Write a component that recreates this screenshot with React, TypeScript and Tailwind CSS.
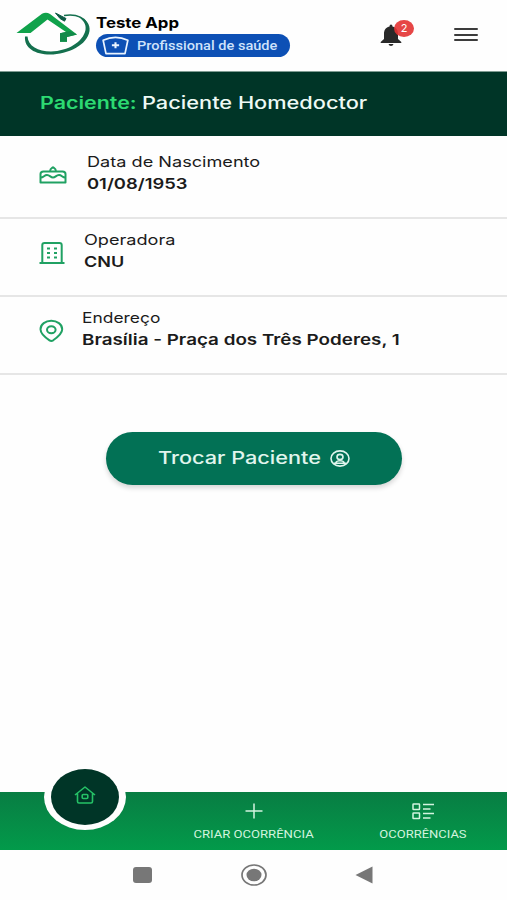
import type { ReactNode } from "react";

function Logo() {
  return (
    <svg viewBox="0 0 76 46" className="h-[46px] w-[76px] shrink-0">
      <path d="M48 3.500 C60 1.500 71.500 5.500 71.500 16" fill="none" stroke="#14704e" strokeWidth="1.500" />
      <path d="M62 4.500 C70 7 74.500 12 73.500 19 C71.500 33 52 42.500 34 42.500 C19 42.500 8 36 9 24.500 L11.500 24.500 C12 34 22 39.500 35 39.500 C52 39 67 30 69.500 18 C70.500 12 67 8 62 4.500Z" fill="#14704e" />
      <path d="M39.500 1 L50 6.500 L48.500 9.200 L44 6.500Z" fill="#0e5b45" stroke="#0e5b45" strokeLinejoin="round" />
      <path d="M0.500 21 L26 1.800 Q30 -.5 34 2 L61 22.500 L51 25 V29.800 H44 V21.300 L50 20 L31.500 7.500 L14.500 21Z" fill="#10a24b" />
      <path d="M44 21.300 L54 19 L61 22.500 L51 25 V29.800 H44Z" fill="#128a4a" />
    </svg>
  );
}

function CakeIcon() {
  return (
    <svg viewBox="0 0 28 18" className="h-[18px] w-[28px]" fill="none" stroke="#20a163" strokeWidth="2" strokeLinejoin="round">
      <path d="M1.500 16.500 V8 Q1.500 5.500 4.500 5.500 H23.500 Q26.500 5.500 26.500 8 V16.500Z" />
      <path d="M1.500 11.500 C5 11.500 5 9 8 9 S11.500 11.500 14 11.500 S17 9 20 9 S23 11.500 26.500 11.500" />
      <path d="M11.500 5 C10.500 3 12.500 2.500 14 1.200 C15.500 2.500 17.500 3 16.500 5" />
    </svg>
  );
}

function BuildingIcon() {
  return (
    <svg viewBox="0 0 26 24" className="h-[24px] w-[26px]" fill="none" stroke="#20a163" strokeWidth="2">
      <path d="M0.500 22 H25.500 M3.300 22 V4 Q3.300 2 5.500 2 H20.500 Q22.700 2 22.700 4 V22" />
      <path d="M8 7.500 h3 M15 7.500 h3 M8 12 h3 M15 12 h3 M8 16.500 h3 M15 16.500 h3" strokeWidth="2.200" />
    </svg>
  );
}

function PinIcon() {
  return (
    <svg viewBox="0 0 26 24" className="h-[24px] w-[26px]" fill="none" stroke="#20a163" strokeWidth="2" strokeLinejoin="round">
      <path d="M10.500 21.300 C7 19 1.500 15 1.500 10.300 C1.500 5.200 6.500 1.800 12.300 1.800 S23.200 5.200 23.200 10.300 C23.200 15 17.500 19 14.200 21.300 Q12.300 22.500 10.500 21.300Z" />
      <ellipse cx="12.300" cy="10.800" rx="4.300" ry="3.500" />
    </svg>
  );
}

function InfoRow({ icon, children }: { icon: ReactNode; children: ReactNode }) {
  return (
    <div className="flex h-[78px] border-b-2 border-[#e6e6e6] pl-[39px]">
      <div className="flex h-[67px] items-center">{icon}</div>
      {children}
    </div>
  );
}

export default function App() {
  return (
    <div className="flex h-[900px] w-[507px] flex-col overflow-hidden bg-[#fefefe] font-['Inter',sans-serif] text-[#1b1b1b]">
      <header className="flex h-[71px] shrink-0 pl-[16px] pt-[12px]">
        <Logo />
        <div className="flex w-[290px] flex-col pl-[4px]">
          <span className="origin-left scale-x-[1.2] self-start whitespace-nowrap text-[14px] leading-[21px] font-bold text-black">Teste App</span>
          <div className="mt-px flex h-[23px] w-[194px] items-center rounded-full bg-[#0d50b5] pl-[5px] text-[#cfe3fb]">
            <svg viewBox="0 0 30 20" className="h-[19px] w-[29px] shrink-0" fill="none" stroke="#eaf4ff" strokeWidth="1.8" strokeLinejoin="round">
              <path d="M2 4.500 Q15 -1.500 28 4.500 L25 18.500 H5Z" />
              <path d="M15 6.500 v6.500 M11.200 9.750 h7.600" strokeWidth="2.200" />
            </svg>
            <span className="ml-[7px] mt-[2px] origin-left scale-x-[1.165] whitespace-nowrap font-['Roboto',sans-serif] text-[12.5px] font-medium">Profissional de saúde</span>
          </div>
        </div>
        <div className="relative ml-[-2px] h-[36px] w-[34px] pt-[12px]">
          <svg viewBox="0 0 22 22" className="h-[22px] w-[22px]" fill="#292929">
            <path d="M9.500 2.500 Q9.500 .5 11 .5 T12.500 2.500 C17 3.500 18 7 18 10 V15 L21.300 18 V19 H.7 V18 L4 15 V10 C4 7 5 3.500 9.500 2.500Z M8.500 20 H13.500 Q13 22 11 22 T8.500 20Z" />
          </svg>
          <span className="absolute left-[14px] top-[8px] flex h-[17px] w-[20px] items-center justify-center rounded-[50%] bg-[#e33232]/90 text-[11px] text-white">2</span>
        </div>
        <div className="ml-[40px] mt-[16px] flex h-[13px] w-[24px] flex-col justify-between">
          <span className="h-[2px] rounded bg-[#3c3c3c]" />
          <span className="h-[2px] rounded bg-[#3c3c3c]" />
          <span className="h-[2px] rounded bg-[#3c3c3c]" />
        </div>
      </header>

      <div className="flex h-[65px] shrink-0 items-center border-t border-[#7f9b92] bg-[#003527] pl-[40px] text-[17px] leading-none">
        <span className="w-[102px] pb-px">
          <span className="inline-block origin-left scale-x-[1.26] whitespace-nowrap font-semibold text-[#2cda72]">Paciente:</span>
        </span>
        <span className="origin-left scale-x-[1.28] whitespace-nowrap pb-px font-medium text-[#eefaf5]">Paciente Homedoctor</span>
      </div>

      <main className="flex grow flex-col">
        <div className="h-[5px] shrink-0" />
        <InfoRow icon={<CakeIcon />}>
          <div className="flex flex-col items-start pl-[20px] pt-[10px]">
            <span className="origin-left scale-x-[1.25] whitespace-nowrap text-[14.5px] leading-[22px]">Data de Nascimento</span>
            <span className="origin-left scale-x-[1.225] whitespace-nowrap text-[15px] leading-[22px] font-semibold">01/08/1953</span>
          </div>
        </InfoRow>
        <InfoRow icon={<BuildingIcon />}>
          <div className="flex flex-col items-start pl-[19px] pt-[10px]">
            <span className="origin-left scale-x-[1.25] whitespace-nowrap text-[14.5px] leading-[22px]">Operadora</span>
            <span className="origin-left scale-x-[1.2] whitespace-nowrap text-[15px] leading-[22px] font-semibold">CNU</span>
          </div>
        </InfoRow>
        <InfoRow icon={<PinIcon />}>
          <div className="flex flex-col items-start pl-[17px] pt-[10px]">
            <span className="origin-left scale-x-[1.2] whitespace-nowrap text-[14.5px] leading-[22px]">Endereço</span>
            <span className="origin-left scale-x-[1.255] whitespace-nowrap text-[15px] leading-[22px] font-semibold">Brasília - Praça dos Três Poderes, 1</span>
          </div>
        </InfoRow>
        <button className="ml-[106px] mt-[57px] flex h-[53px] w-[296px] items-center rounded-full bg-[#027155] pl-[52px] text-[#e0f5ed] shadow-[0_3px_5px_rgba(0,0,0,0.16)]">
          <span className="w-[172px] pb-px text-left">
            <span className="inline-block origin-left scale-x-[1.275] whitespace-nowrap text-[17px] leading-[22px] font-medium">Trocar Paciente</span>
          </span>
          <svg viewBox="0 0 20 17" className="h-[17px] w-[20px]" fill="none" stroke="currentColor" strokeWidth="1.6">
            <ellipse cx="10" cy="8.500" rx="9" ry="7.600" />
            <ellipse cx="10" cy="7" rx="3" ry="2.600" />
            <path d="M4 13.200 H16 M5.800 12.800 Q6.500 10.800 10 10.800 T14.200 12.800" />
          </svg>
        </button>
      </main>

      <nav className="relative flex h-[58px] shrink-0 bg-linear-to-b from-[#087d43] to-[#029a4a] text-[#d3f4df]">
        <div className="absolute left-[44px] top-[-28px] flex h-[66px] w-[82px] items-center justify-center rounded-[50%] bg-[#fefefe]">
          <div className="flex h-[56px] w-[68px] items-center justify-center rounded-[50%] bg-[#003527] pb-[4px]">
            <svg viewBox="0 0 22 18" className="h-[18px] w-[22px]" fill="none" stroke="#25c267" strokeWidth="1.6" strokeLinejoin="round">
              <path d="M1 9 L11 1 L21 9 M3.500 7.500 V15.500 Q3.500 17 5 17 H17 Q18.500 17 18.500 15.500 V7.500" />
              <rect x="8.200" y="8.500" width="5.600" height="4" rx="1" />
            </svg>
          </div>
        </div>
        <div className="ml-[169px] flex w-[169px] flex-col items-center pt-[11px]">
          <svg viewBox="0 0 18 16" className="h-[16px] w-[18px]" fill="none" stroke="currentColor" strokeWidth="1.5">
            <path d="M9 0.500 V15.500 M0.500 8 H17.500" />
          </svg>
          <span className="mt-[8px] scale-x-[1.19] whitespace-nowrap font-['Roboto',sans-serif] text-[11px] leading-[16px]">CRIAR OCORRÊNCIA</span>
        </div>
        <div className="flex w-[169px] flex-col items-center pt-[11px]">
          <svg viewBox="0 0 22 17" className="h-[17px] w-[22px]" fill="none" stroke="currentColor" strokeWidth="1.5">
            <rect x="1" y="1" width="6.500" height="5.500" rx=".5" />
            <rect x="1" y="10" width="6.500" height="5.500" rx=".5" />
            <path d="M11 1.500 h11 M11 6 h7.500 M11 10.500 h11 M11 15 h7.500" />
          </svg>
          <span className="mt-[7px] scale-x-[1.18] whitespace-nowrap font-['Roboto',sans-serif] text-[11px] leading-[16px]">OCORRÊNCIAS</span>
        </div>
      </nav>

      <footer className="flex h-[50px] shrink-0 items-center pl-[133px]">
        <div className="h-[16px] w-[19px] rounded-[3px] bg-[#777]" />
        <svg viewBox="0 0 26 22" className="ml-[89px] h-[22px] w-[26px]">
          <ellipse cx="13" cy="11" rx="12" ry="10" fill="none" stroke="#777" strokeWidth="1.7" />
          <ellipse cx="13" cy="11" rx="7.500" ry="6.300" fill="#777" />
        </svg>
        <svg viewBox="0 0 18 18" className="ml-[88px] h-[18px] w-[18px]" fill="#777">
          <path d="M0.500 9 L17.500 .5 V17.500Z" />
        </svg>
      </footer>
    </div>
  );
}
